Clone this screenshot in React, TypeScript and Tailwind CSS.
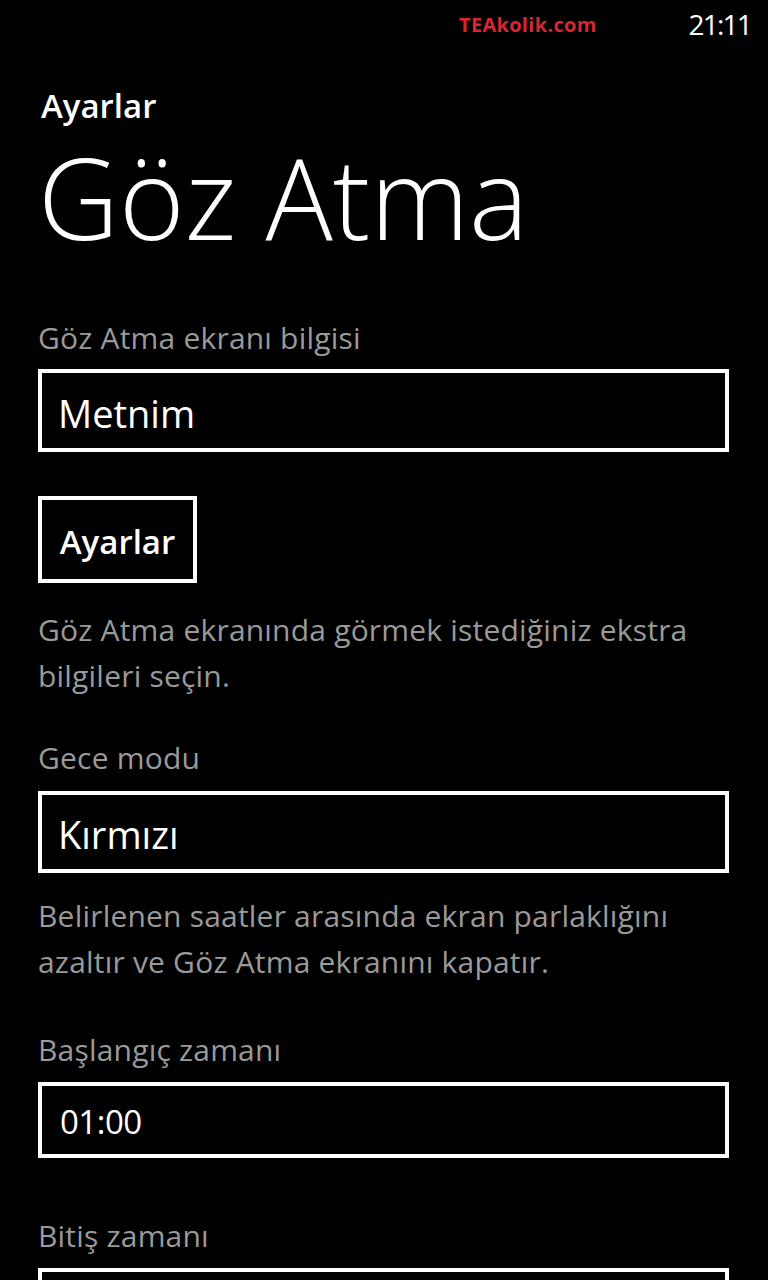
import React from "react";

const font = { fontFamily: '"Open Sans", "Noto Sans", sans-serif' };

function Label({ children, mt }: { children: React.ReactNode; mt: string }) {
  return (
    <div className={`${mt} text-[30px] leading-[40px] tracking-[0.2px] text-[#9a9a9a] whitespace-nowrap`}>
      {children}
    </div>
  );
}

export default function App() {
  return (
    <div
      className="w-[768px] h-[1280px] bg-black text-white overflow-hidden flex flex-col"
      style={font}
    >
      {/* status bar */}
      <div className="h-[48px] flex justify-end items-start pr-[17px]">
        <span className="mt-[11px] text-[20px] leading-[28px] font-bold tracking-[0.3px] text-[#d8272f]">
          TEAkolik.com
        </span>
        <span className="ml-[92px] mt-[4px] text-[28px] leading-[40px] font-normal tracking-[-1.8px]">
          21:11
        </span>
      </div>

      <div className="flex flex-col pl-[38px] pr-[39px]">
        <div className="mt-[42px] ml-[3px] text-[33px] leading-[40px] font-semibold">
          Ayarlar
        </div>
        <div className="mt-[15px] text-[112px] leading-[112px] font-light whitespace-nowrap">
          Göz Atma
        </div>

        <Label mt="mt-[65px]">Göz Atma ekranı bilgisi</Label>
        <div className="mt-[11px] h-[83px] border-4 border-white pl-[16px] pt-[14px]">
          <div className="text-[38px] leading-[52px]">Metnim</div>
        </div>

        <div className="mt-[44px] w-[159px] h-[87px] border-4 border-white flex justify-center pt-[20px]">
          <span className="text-[33px] leading-[44px] font-semibold">Ayarlar</span>
        </div>

        <div className="mt-[24px] text-[30px] leading-[46px] tracking-[0.2px] text-[#9a9a9a] whitespace-nowrap">
          Göz Atma ekranında görmek istediğiniz ekstra
          <br />
          bilgileri seçin.
        </div>

        <Label mt="mt-[39px]">Gece modu</Label>
        <div className="mt-[13px] h-[82px] border-4 border-white pl-[16px] pt-[13px]">
          <div className="text-[38px] leading-[52px]">Kırmızı</div>
        </div>

        <div className="mt-[20px] text-[30px] leading-[46px] tracking-[0.2px] text-[#9a9a9a] whitespace-nowrap">
          Belirlenen saatler arasında ekran parlaklığını
          <br />
          azaltır ve Göz Atma ekranını kapatır.
        </div>

        <Label mt="mt-[45px]">Başlangıç zamanı</Label>
        <div className="mt-[12px] h-[76px] border-4 border-white pl-[18px] pt-[13px]">
          <div className="text-[33px] leading-[46px] tracking-[-0.5px]">01:00</div>
        </div>

        <Label mt="mt-[58px]">Bitiş zamanı</Label>
        <div className="mt-[12px] h-[76px] border-4 border-white shrink-0" />
      </div>
    </div>
  );
}
